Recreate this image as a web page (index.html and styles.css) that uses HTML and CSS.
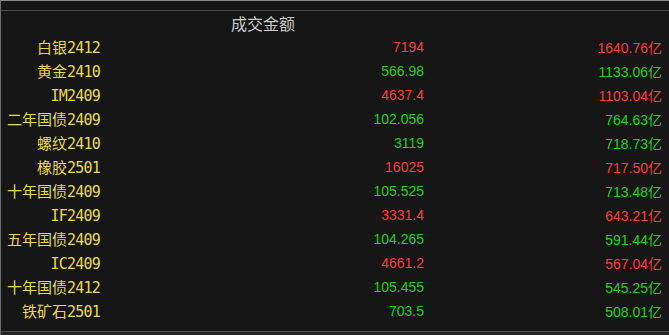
FILE: index.html
```html
<!DOCTYPE html>
<html lang="zh">
<head>
<meta charset="utf-8">
<link rel="stylesheet" href="styles.css">
</head>
<body>
<div class="panel">
  <div class="topbar"></div>
  <div class="head"><span class="head-label">成交金额</span></div>
  <div class="table">
    <div class="row"><span class="name">白银<b>2412</b></span><span class="num up">7194</span><span class="amt up">1640.76<i>亿</i></span></div>
    <div class="row"><span class="name">黄金<b>2410</b></span><span class="num dn">566.98</span><span class="amt dn">1133.06<i>亿</i></span></div>
    <div class="row"><span class="name"><b>IM2409</b></span><span class="num up">4637.4</span><span class="amt up">1103.04<i>亿</i></span></div>
    <div class="row"><span class="name">二年国债<b>2409</b></span><span class="num dn">102.056</span><span class="amt dn">764.63<i>亿</i></span></div>
    <div class="row"><span class="name">螺纹<b>2410</b></span><span class="num dn">3119</span><span class="amt dn">718.73<i>亿</i></span></div>
    <div class="row"><span class="name">橡胶<b>2501</b></span><span class="num up">16025</span><span class="amt up">717.50<i>亿</i></span></div>
    <div class="row"><span class="name">十年国债<b>2409</b></span><span class="num dn">105.525</span><span class="amt dn">713.48<i>亿</i></span></div>
    <div class="row"><span class="name"><b>IF2409</b></span><span class="num up">3331.4</span><span class="amt up">643.21<i>亿</i></span></div>
    <div class="row"><span class="name">五年国债<b>2409</b></span><span class="num dn">104.265</span><span class="amt dn">591.44<i>亿</i></span></div>
    <div class="row"><span class="name"><b>IC2409</b></span><span class="num up">4661.2</span><span class="amt up">567.04<i>亿</i></span></div>
    <div class="row"><span class="name">十年国债<b>2412</b></span><span class="num dn">105.455</span><span class="amt dn">545.25<i>亿</i></span></div>
    <div class="row"><span class="name">铁矿石<b>2501</b></span><span class="num dn">703.5</span><span class="amt dn">508.01<i>亿</i></span></div>
  </div>
  <div class="foot"></div>
</div>
</body>
</html>
```
FILE: styles.css
```css
html, body {
  margin: 0;
  padding: 0;
  background: #161616;
}
.panel {
  width: 669px;
  height: 335px;
  box-sizing: border-box;
  border-top: 1px solid #8c8c8c;
  border-left: 1px solid #6e6e6e;
  background: #161616;
  display: flex;
  flex-direction: column;
  overflow: hidden;
}
.topbar {
  height: 9px;
  border-bottom: 1px solid #4a4a4a;
  flex: none;
}
.head {
  height: 24px;
  line-height: 24px;
  padding-left: 230px;
  color: #c9c9c9;
  font: 16px/24px "Noto Sans CJK SC", sans-serif;
  flex: none;
}
.table {
  display: grid;
  grid-template-columns: 99px 324px 238px;
  flex: none;
}
.row {
  display: contents;
}
.row > span {
  height: 24px;
  line-height: 24px;
  text-align: right;
  white-space: nowrap;
}
.name {
  color: #ecd94a;
  font-size: 15px;
  font-family: "Noto Sans CJK SC", sans-serif;
}
.name b {
  font-weight: normal;
  font-family: "DejaVu Sans Mono", monospace;
  font-size: 15px;
  letter-spacing: -0.8px;
}
.num, .amt {
  font-family: "Liberation Sans", Arial, sans-serif;
  font-size: 14px;
}
.amt i {
  font-style: normal;
  font-family: "Noto Sans CJK SC", sans-serif;
  font-size: 14px;
}
.up { color: #ff3b3b; }
.dn { color: #1fd21f; }
.foot {
  margin-top: auto;
  height: 3px;
  border-top: 1px solid #4e4e4e;
  background: #262626;
  flex: none;
}
```
